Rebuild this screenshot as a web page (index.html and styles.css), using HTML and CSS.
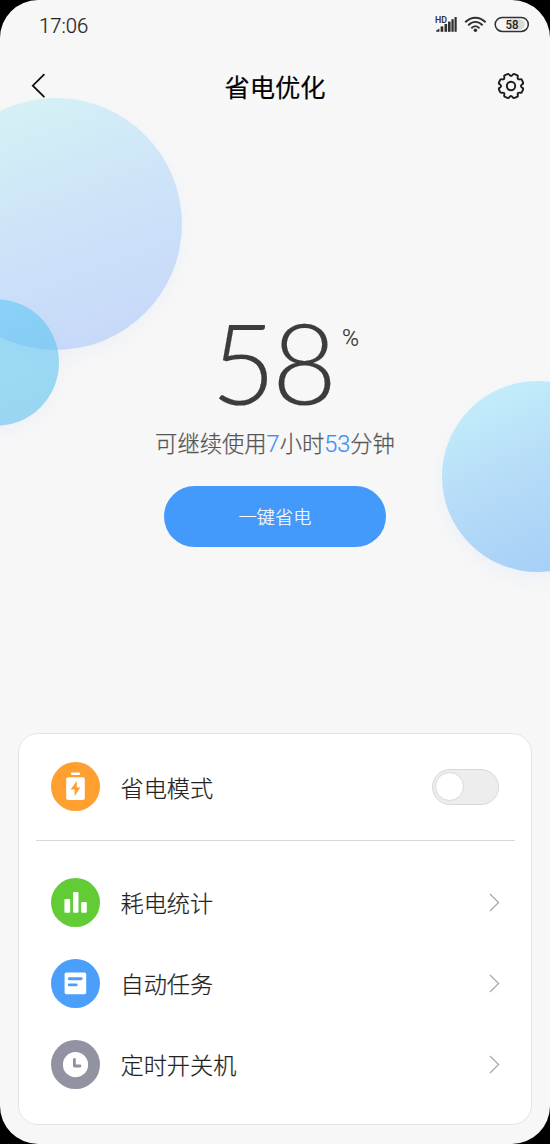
FILE: index.html
```html
<!DOCTYPE html>
<html lang="zh-CN">
<head>
<meta charset="utf-8">
<title>省电优化</title>
<link rel="stylesheet" href="styles.css">
</head>
<body>
<div class="screen">
  <div class="bubble bubble-large"></div>
  <div class="bubble bubble-small"></div>
  <div class="bubble bubble-right"></div>

  <div class="status-bar">
    <span class="clock">17:06</span>
    <svg class="status-icons" viewBox="0 0 96 20" width="96" height="20">
      <text class="hd" x="0" y="8.7" textLength="12" lengthAdjust="spacingAndGlyphs">HD</text>
      <g fill="#303030">
        <path d="M1.2 17.8v-1.4l3.2-1.8v3.2z"/>
        <rect x="5.6" y="12.4" width="2.7" height="5.4"/>
        <rect x="9.5" y="10" width="2.6" height="7.8"/>
        <rect x="13" y="7.6" width="2.6" height="10.2"/>
        <rect x="16.4" y="5.2" width="2.3" height="12.6"/>
        <rect x="19.5" y="3" width="2.2" height="14.8"/>
        <circle cx="40.4" cy="16.3" r="1.8"/>
      </g>
      <g fill="none" stroke="#303030" stroke-width="1.9">
        <path d="M30.2 8.2Q34.8 3.7 40.4 3.7T50.6 8.2"/>
        <path d="M33.2 11.3Q36.5 7.9 40.4 7.9T47.6 11.3"/>
        <path d="M36.3 14.3Q38.2 12.1 40.4 12.1T44.5 14.3"/>
      </g>
      <path d="M74 5.2h10.5a5.2 5.2 0 0 1 0 10.4h-10.5z" fill="#d9d9d9"/>
      <rect x="60.2" y="3.4" width="33.1" height="14" rx="7" fill="none" stroke="#303030" stroke-width="1.5"/>
      <text class="level" x="70.5" y="14.7" textLength="13" lengthAdjust="spacingAndGlyphs">58</text>
    </svg>
  </div>

  <header class="title-bar">
    <svg class="back" viewBox="0 0 16 26" width="16" height="26"><path d="M14.4 1.2L2.8 12.7L14.4 24.2" fill="none" stroke="#111" stroke-width="1.8"/></svg>
    <h1>省电优化</h1>
    <svg class="gear" viewBox="-14 -14 28 28" width="28" height="28" fill="none" stroke="#1c1c1c" stroke-width="1.9" stroke-linejoin="round">
      <path id="gear-outline" d=""/>
      <circle r="4.2"/>
    </svg>
  </header>

  <main class="summary">
    <div class="percent"><span class="number">58</span><span class="unit">%</span></div>
    <p class="remaining">可继续使用<b>7</b>小时<b>53</b>分钟</p>
    <button class="save">一键省电</button>
  </main>

  <section class="card">
    <div class="row row-mode">
      <svg class="icon" viewBox="0 0 49 49"><circle cx="24.5" cy="24.5" r="24.5" fill="#ff9f30"/><rect x="20" y="10.5" width="9" height="2.6" rx="1.1" fill="#fff"/><rect x="15.2" y="15.2" width="18.6" height="22.8" rx="2" fill="#fff"/><path d="M25.8 19L19.6 27.6H23.6V34.2L29.3 25.6H25.8Z" fill="#ff9f30"/></svg>
      <span class="label">省电模式</span>
      <span class="toggle"><span class="knob"></span></span>
    </div>
    <div class="row">
      <svg class="icon" viewBox="0 0 49 49"><circle cx="24.5" cy="24.5" r="24.5" fill="#62cc36"/><g fill="#fff"><rect x="13.4" y="21" width="5.8" height="13.8" rx="1"/><rect x="22" y="13.9" width="5.5" height="20.9" rx="1.2"/><rect x="30.1" y="24" width="5.7" height="10.8" rx="1"/></g></svg>
      <span class="label">耗电统计</span>
      <svg class="chevron" viewBox="0 0 11 19"><path d="M1 1L9.6 9.5L1 18"/></svg>
    </div>
    <div class="row">
      <svg class="icon" viewBox="0 0 49 49"><circle cx="24.5" cy="24.5" r="24.5" fill="#4b9ffb"/><rect x="13.6" y="13.5" width="21.6" height="21.8" rx="1.8" fill="#fff"/><path d="M18.3 19.7H30.2M18.3 25.9H25.2" stroke="#4b9ffb" stroke-width="2.9" stroke-linecap="round"/></svg>
      <span class="label">自动任务</span>
      <svg class="chevron" viewBox="0 0 11 19"><path d="M1 1L9.6 9.5L1 18"/></svg>
    </div>
    <div class="row">
      <svg class="icon" viewBox="0 0 49 49"><circle cx="24.5" cy="24.5" r="24.5" fill="#9192a2"/><circle cx="24.5" cy="24.7" r="12.6" fill="#fff"/><path d="M23.4 19.3V26H29" fill="none" stroke="#9192a2" stroke-width="2.8" stroke-linecap="round" stroke-linejoin="round"/></svg>
      <span class="label">定时开关机</span>
      <svg class="chevron" viewBox="0 0 11 19"><path d="M1 1L9.6 9.5L1 18"/></svg>
    </div>
  </section>
</div>
<script src="gear.js"></script>
</body>
</html>
```
FILE: gear.js
```js
// Eight-toothed gear outline with rounded corners and short notches.
const polar = (r, deg) => {
  const a = deg * Math.PI / 180;
  return (r * Math.cos(a)).toFixed(2) + ' ' + (r * Math.sin(a)).toFixed(2);
};
let outline = '';
for (let i = 0; i < 8; i++) {
  const tooth = i * 45 + 22.5;
  outline += (i ? 'L' : 'M') + polar(11.3, tooth - 14);
  outline += 'Q' + polar(12.7, tooth - 12) + ' ' + polar(12.5, tooth - 6);
  outline += 'L' + polar(12.5, tooth + 6);
  outline += 'Q' + polar(12.7, tooth + 12) + ' ' + polar(11.3, tooth + 14);
  outline += 'Q' + polar(8.7, tooth + 22.5) + ' ' + polar(11.3, tooth + 31);
}
document.getElementById('gear-outline').setAttribute('d', outline + 'Z');
```
FILE: styles.css
```css
* { box-sizing: border-box; }
body { margin: 0; background: #000; font-family: "Noto Sans CJK SC", sans-serif; }
.screen {
  position: relative;
  display: flex;
  flex-direction: column;
  width: 550px;
  height: 1144px;
  padding: 0 18px 19px;
  overflow: hidden;
  border-radius: 38px;
  background: #f7f7f7;
}
.bubble { position: absolute; border-radius: 50%; }
.bubble-large {
  left: -70px; top: 98px; width: 252px; height: 252px;
  background: linear-gradient(160deg, #d6f1f5 8%, #cde4f8 48%, #c7d8f8 92%);
  box-shadow: 0 8px 20px rgba(120, 160, 255, .06);
}
.bubble-small {
  left: -68px; top: 299px; width: 127px; height: 127px;
  background: linear-gradient(160deg, rgba(86, 202, 248, .55), rgba(70, 182, 235, .53));
  box-shadow: 0 8px 20px rgba(120, 160, 255, .06);
}
.bubble-right {
  left: 442px; top: 381px; width: 191px; height: 191px;
  background: linear-gradient(155deg, #c3ecfa 12%, #b5dbf7 48%, #a7d0f8 85%);
  box-shadow: 0 8px 20px rgba(120, 160, 255, .08);
}
.status-bar {
  position: relative;
  display: flex;
  justify-content: space-between;
  align-items: center;
  height: 50px;
  padding: 0 1.5px 0 21px;
}
.clock { padding-top: 1px; font: 300 20.3px/24px Roboto, sans-serif; -webkit-text-stroke: .2px #222; color: #222; }
.status-icons { margin-top: -3px; }
.hd { font: 600 8.5px Roboto, sans-serif; fill: #303030; }
.level { font: 500 12px Roboto, sans-serif; fill: #222; }
.title-bar {
  position: relative;
  display: grid;
  grid-template-columns: 28px 1fr 28px;
  align-items: center;
  height: 71px;
  padding: 0 7px 0 12px;
}
.title-bar h1 { margin: 0 5px 0 0; font-size: 25.3px; line-height: 36px; font-weight: 400; -webkit-text-stroke: .15px #000; text-align: center; color: #000; }
.summary {
  position: relative;
  display: flex;
  flex-direction: column;
  align-items: center;
  height: 612px;
  padding-top: 191px;
}
.percent { display: flex; align-items: flex-start; height: 115px; padding-left: 20px; color: #3c3c3c; }
.number { margin-top: -4px; font: 300 112px/108px Lato, sans-serif; letter-spacing: -4px; -webkit-text-stroke: .2px #3c3c3c; }
.unit { margin: 15px 0 0 9px; font: 300 23px/24px Roboto, sans-serif; -webkit-text-stroke: .2px #333; color: #333; }
.remaining { margin: 0; font-size: 22.3px; line-height: 30px; font-weight: 300; -webkit-text-stroke: .25px #555; color: #555; white-space: nowrap; }
.remaining b { font: 300 23.5px/24px Roboto, sans-serif; -webkit-text-stroke: .2px #3b93f0; color: #3b93f0; }
.save {
  flex: none;
  width: 222px;
  height: 61px;
  margin-top: 29px;
  padding: 0 0 1px;
  border: 0;
  border-radius: 31px;
  background: #449afa;
  color: #fff;
  font: 300 18.2px/28px "Noto Sans CJK SC", sans-serif;
  -webkit-text-stroke: .15px #fff;
}
.card {
  position: relative;
  height: 392px;
  border: 1px solid #e5e5e5;
  border-radius: 20px;
  background: #fff;
}
.row { display: flex; align-items: center; height: 81.3px; margin: 0 16px 0 17px; padding: 0 15px; }
.row-mode { height: 107px; padding: 0 16px 1px 15px; border-bottom: 1px solid #d9d9d9; margin-bottom: 20.5px; }
.icon { width: 49px; height: 49px; flex: none; }
.label { flex: 1; margin: -1px 0 0 20.5px; font-size: 23.2px; line-height: 34px; font-weight: 300; -webkit-text-stroke: .2px #222; color: #222; }
.row-mode .label { margin-top: 1px; }
.toggle { display: flex; align-items: center; width: 67px; height: 36px; padding-left: 2px; border: 1px solid #d8d8d8; border-radius: 18px; background: #ededed; }
.knob { width: 29px; height: 29px; border: 1px solid #d8d8d8; border-radius: 50%; background: #fff; }
.chevron { width: 11px; height: 19px; fill: none; stroke: #a5a5a5; stroke-width: 1.2; }
```
